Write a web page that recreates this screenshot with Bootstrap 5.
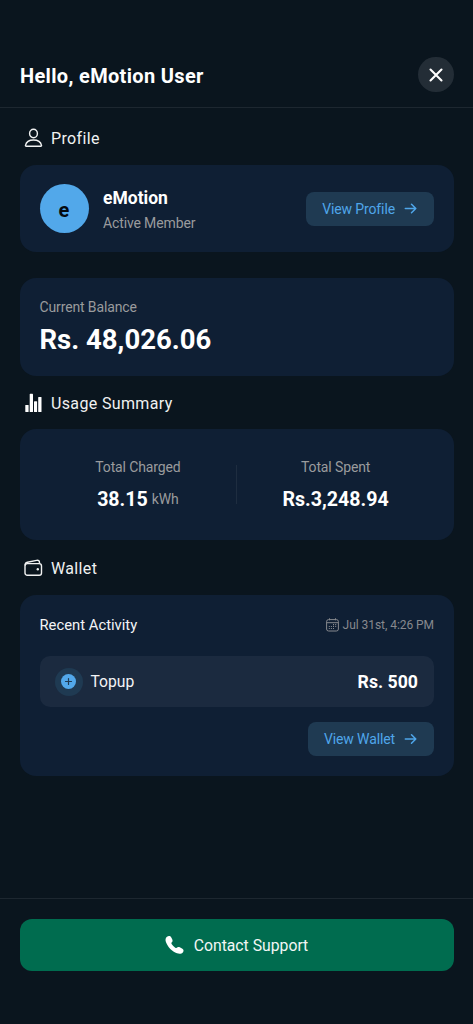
<!DOCTYPE html>
<html lang="en">
<head>
<meta charset="utf-8">
<meta name="viewport" content="width=device-width, initial-scale=1">
<title>eMotion</title>
<link href="https://cdn.jsdelivr.net/npm/bootstrap@5.3.0/dist/css/bootstrap.min.css" rel="stylesheet">
<style>
body{background:#0a151e;color:#fff;font-family:Roboto,"Liberation Sans",sans-serif;height:1024px;overflow:hidden;line-height:1.2}
svg{display:block;flex:none}
.top-bar{height:108px;padding:44px 19.500px 0 20px;border-bottom:1px solid #1d2730}
.title{font-size:20px;font-weight:700;letter-spacing:.33px}
.close-btn{width:35.500px;height:35.500px;background:#232d36;margin-top:-2px}
main{padding:0 19.5px}
.heading{font-size:16px;letter-spacing:.36px;color:#f0f1f1;gap:8px;padding-left:4.500px}
.heading span{padding-top:2px}
.panel{background:#0f1f34;border-radius:16px;padding:0 19.500px 0 20px}
.avatar{width:49px;height:49px;background:#52a8ea;color:#050a10;font-size:20px;font-weight:700;padding-top:3px}
.muted{color:#9a9b9d;font-size:14px;letter-spacing:-.13px}
.soft-btn{background:#1f3a52;color:#4fa6ea;border-radius:8px;height:34px;font-size:14px;letter-spacing:-.12px;padding:0 17px 0 16px;gap:9px;text-decoration:none}
.soft-btn span{padding-top:1px}
.name{font-size:17.500px;font-weight:700}
.balance{font-size:27.500px;font-weight:700}
.value{font-size:19.600px;font-weight:700}
.divider{width:1px;height:39px;background:#1e2d40}
.entry{background:#1b2a3f;border-radius:10px;height:51px;padding:0 16px 0 15px}
.plus{width:28px;height:28px;background:#1f3a52}
footer{border-top:1px solid #1d2730;padding:20px 19.500px 0;height:126px}
.support{background:#006c4f;color:#f2f7f5;border-radius:12px;height:52px;font-size:15.750px;text-decoration:none;gap:9px}
</style>
</head>
<body class="d-flex flex-column">
<header class="top-bar d-flex align-items-center justify-content-between flex-shrink-0">
  <div class="title">Hello, eMotion User</div>
  <button class="close-btn btn p-0 border-0 rounded-circle d-flex align-items-center justify-content-center" aria-label="Close">
    <svg width="14" height="14" viewBox="0 0 14 14" stroke="#fff" stroke-width="2.100" stroke-linecap="round"><path d="M1.500 1.500l11 11M12.500 1.500l-11 11"/></svg>
  </button>
</header>
<main class="flex-grow-1">
  <div class="heading d-flex align-items-center" style="height:57px;padding-top:3px">
    <svg width="19" height="20" viewBox="0 0 19 20" fill="none" stroke="#f0f1f1" stroke-width="1.400"><ellipse cx="9.500" cy="5.500" rx="3.900" ry="4.300"/><path d="M2.200 18.200c-.6 0-.8-.4-.7-.9C2.200 14 5.400 12 9.500 12s7.300 2 8 5.300c.1.500-.1.900-.7.900z"/></svg>
    <span>Profile</span>
  </div>
  <section class="panel d-flex align-items-center" style="height:87px">
    <div class="avatar rounded-circle d-flex align-items-center justify-content-center">e</div>
    <div class="flex-grow-1" style="margin-left:14.500px;padding-top:3px">
      <div class="name">eMotion</div>
      <div class="muted" style="margin-top:6px">Active Member</div>
    </div>
    <a href="#" class="soft-btn d-flex align-items-center"><span>View Profile</span>
      <svg width="13" height="14" viewBox="0 0 13 14" fill="none" stroke="#4fa6ea" stroke-width="1.500" stroke-linecap="round" stroke-linejoin="round"><path d="M1.300 6.500h10.500M7.500 2.200l4.300 4.300-4.300 4.300"/></svg></a>
  </section>
  <section class="panel d-flex flex-column justify-content-center" style="height:98px;margin-top:26px;padding-top:1px">
    <div class="muted">Current Balance</div>
    <div class="balance" style="margin-top:7px">Rs. 48,026.06</div>
  </section>
  <div class="heading d-flex align-items-center" style="height:53px">
    <svg width="19" height="20" viewBox="0 0 19 20" fill="#fff"><rect x="1.300" y="12" width="3.300" height="7" rx=".6"/><rect x="5.700" y=".8" width="3.300" height="18.200" rx=".6"/><rect x="10" y="8.200" width="3.100" height="10.800" rx=".6"/><rect x="14.200" y="4" width="3.300" height="15" rx=".6"/></svg>
    <span>Usage Summary</span>
  </div>
  <section class="panel d-flex align-items-center text-center" style="height:111px">
    <div class="flex-fill w-50" style="padding-top:2px">
      <div class="muted">Total Charged</div>
      <div class="d-flex align-items-center justify-content-center" style="margin-top:12px;gap:4px"><span class="value">38.15</span><span class="muted">kWh</span></div>
    </div>
    <div class="divider"></div>
    <div class="flex-fill w-50" style="padding-top:2px">
      <div class="muted">Total Spent</div>
      <div class="value" style="margin-top:12px">Rs.3,248.94</div>
    </div>
  </section>
  <div class="heading d-flex align-items-center" style="height:55px;padding-top:1px">
    <svg width="19" height="18" viewBox="0 0 19 18" fill="none" stroke="#f0f1f1" stroke-width="1.400" stroke-linejoin="round"><rect x="1" y="4.600" width="16.500" height="11.700" rx="2.300"/><path d="M1.100 6.500C1 4.300 1.700 3.700 3.400 3.300l9.200-1.900c1.800-.4 2.900.4 2.900 2v1.200"/><circle cx="13.800" cy="10.300" r="1.200" fill="#f0f1f1" stroke="none"/></svg>
    <span>Wallet</span>
  </div>
  <section class="panel" style="height:181px;padding-top:20px">
    <div class="d-flex align-items-center justify-content-between" style="height:20px">
      <span style="font-size:14.800px;color:#f3f4f6;padding-top:2px">Recent Activity</span>
      <span class="d-flex align-items-center" style="gap:4px;font-size:12px;color:#87898e">
        <svg width="13" height="14" viewBox="0 0 13 14" fill="none" stroke="#87898e"><rect x=".6" y="1.600" width="11.800" height="11.400" rx="2"/><path d="M1 4.700h11M3.500.3v2M9.500.3v2"/><path stroke-width="1.200" d="M2.800 8.500h1M4.900 8.500h1M7 6.700h1M9.200 6.700h1M7 8.500h1M9.200 8.500h1M2.800 10.500h1M4.900 10.500h1M7 10.500h1"/></svg>
        <span style="padding-top:1px;letter-spacing:-.05px">Jul 31st, 4:26 PM</span></span>
    </div>
    <div class="entry d-flex align-items-center" style="margin-top:21px">
      <span class="plus rounded-circle d-flex align-items-center justify-content-center">
        <svg width="15" height="15" viewBox="0 0 15 15"><circle cx="7.500" cy="7.500" r="7.500" fill="#52a8ea"/><path d="M7.500 4.500v6M4.500 7.500h6" stroke="#1f3a52" stroke-width="1.200" stroke-linecap="round"/></svg>
      </span>
      <span class="flex-grow-1" style="margin-left:8px;padding-top:1px;font-size:15.700px;color:#f3f4f6">Topup</span>
      <span style="font-size:17.700px;font-weight:700;padding-top:2px">Rs. 500</span>
    </div>
    <div class="d-flex justify-content-end" style="margin-top:15px">
      <a href="#" class="soft-btn d-flex align-items-center"><span>View Wallet</span>
        <svg width="13" height="14" viewBox="0 0 13 14" fill="none" stroke="#4fa6ea" stroke-width="1.500" stroke-linecap="round" stroke-linejoin="round"><path d="M1.300 7h10.500M7.500 2.700L11.800 7l-4.300 4.300"/></svg></a>
    </div>
  </section>
</main>
<footer class="flex-shrink-0">
  <a href="#" class="support d-flex align-items-center justify-content-center">
    <svg width="20" height="20" viewBox="0 0 20 20" fill="#fff"><path d="M2 1.700C3.600.6 5.400.9 6.300 2.500l1 2c.6 1.300.2 2.200-.7 3.100-.4.400-.3.800 0 1.300.9 1.500 2.200 2.800 3.700 3.800.6.400 1 .4 1.400 0 .9-.9 1.900-1.100 3.100-.4l2.600 1.500c1.300.8 1.500 2.200.6 3.400-1.300 1.700-3.600 2-6 1.100C7 16.500 2.900 12.200 1 7.300.2 5.100.3 2.900 2 1.700z"/></svg>
    <span style="padding-top:2px">Contact Support</span>
  </a>
</footer>
<script src="https://cdn.jsdelivr.net/npm/bootstrap@5.3.0/dist/js/bootstrap.bundle.min.js"></script>
</body>
</html>
